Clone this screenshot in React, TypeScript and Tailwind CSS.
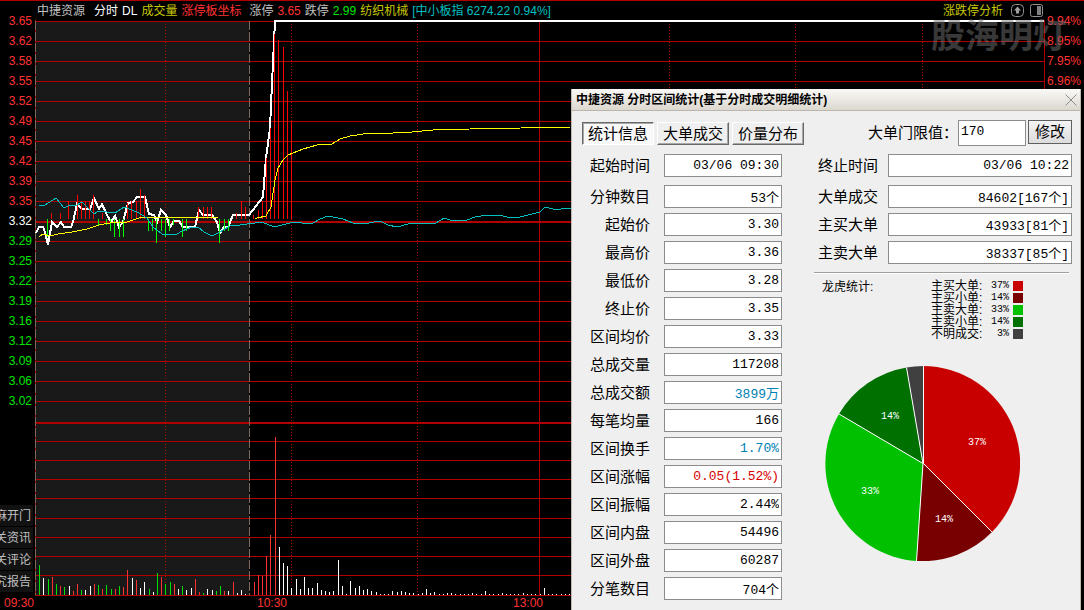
import React from "react";

const PRICES = [
  "3.65", "3.62", "3.58", "3.55", "3.52", "3.49", "3.45", "3.42", "3.39", "3.35",
  "3.32", "3.29", "3.25", "3.22", "3.19", "3.16", "3.12", "3.09", "3.06", "3.02",
];
const BASE_INDEX = 10;
const PERCENTS = ["9.94%", "8.95%", "7.95%", "6.96%"];
const SIDE_LINKS = ["麻开门", "关资讯", "关评论", "究报告"];

const BOTTOM = 595;
const GRID_ROWS = [
  ...PRICES.map((_, i) => 21 + i * 20).filter((y) => y !== 221),
  441, 460, 479, 498, 518, 537, 556, 575, BOTTOM,
];

const PRICE_LINE =
  "36,233 39,227 43,227 45,232 48,245 52,222 57,227 61,222 64,227 71,227 73,222 77,204 82,209 90,209 94,198 99,209 102,204 107,215 111,222 115,216 119,227 123,222 128,203 133,202 137,197 145,197 149,214 154,215 157,222 161,210 166,215 170,227 174,221 179,221 183,227 195,227 199,210 203,215 212,215 217,222 220,233 224,227 228,227 233,215 249,215 263,197 266,158 270,128 272,83 274,42 275,21 1044,21";
const AVERAGE_LINE =
  "39,237 43,234 50,236 58,234 72,232 87,229 99,225 110,223 127,222 142,217 167,217 218,218 257,218 266,216 271,207 275,180 278,168 283,160 288,155 303,149 317,145 332,144 340,139 350,136 370,133 393,133 412,132 433,130 470,129 521,128 571,127 700,126";
const INDEX_LINE =
  "39,205 45,205 56,198 64,208 70,205 75,206 82,202 94,214 99,211 115,213 124,207 137,212 147,218 153,227 162,234 177,234 182,231 192,227 198,227 204,232 212,236 220,232 230,226 240,225 262,222 274,227 290,223 297,222 307,224 313,223 320,219 328,216 343,219 353,223 363,224 380,221 388,225 397,227 412,223 418,224 436,223 444,218 453,221 467,220 475,217 488,215 503,216 511,218 520,217 540,212 545,207 553,209 561,209 571,208 600,208";

const UP_BARS: [number, number][] = [
  [51, 213], [60, 213], [68, 201], [77, 195], [81, 201], [85, 201], [89, 201], [93, 195],
  [102, 213], [127, 203], [131, 201], [136, 201], [140, 189], [144, 195], [198, 207],
  [203, 207], [207, 207], [211, 207], [236, 213], [241, 201], [245, 207], [253, 215],
  [258, 210], [262, 201], [266, 158], [270, 128], [274, 34], [278, 40], [283, 47],
  [287, 91], [291, 122],
];
const DOWN_BARS: [number, number][] = [
  [47, 237], [98, 225], [106, 225], [110, 231], [114, 237], [119, 237], [123, 237],
  [148, 231], [152, 231], [156, 243], [161, 231], [165, 237], [169, 231], [173, 225],
  [182, 237], [186, 231], [219, 243], [224, 231], [228, 231],
];

const VOLUME: [number, number, string][] = [
  [39, 30, "g"], [43, 17, "w"], [48, 16, "g"], [52, 18, "r"], [56, 11, "g"], [60, 9, "r"],
  [64, 8, "g"], [69, 9, "w"], [73, 4, "r"], [77, 11, "r"], [81, 5, "g"], [85, 5, "w"],
  [90, 9, "w"], [94, 11, "r"], [98, 10, "g"], [102, 6, "r"], [106, 10, "g"], [111, 6, "g"],
  [115, 6, "r"], [119, 9, "g"], [123, 8, "r"], [127, 25, "r"], [132, 17, "w"], [136, 15, "r"],
  [140, 7, "w"], [144, 13, "w"], [149, 6, "g"], [153, 3, "w"], [157, 22, "g"], [161, 18, "r"],
  [165, 11, "g"], [170, 13, "g"], [174, 11, "r"], [178, 6, "w"], [182, 9, "g"], [186, 5, "w"],
  [191, 7, "w"], [195, 16, "r"], [199, 3, "r"], [203, 2, "g"], [207, 6, "w"], [212, 5, "w"],
  [216, 4, "g"], [220, 9, "g"], [224, 4, "r"], [228, 4, "w"], [233, 13, "r"], [237, 2, "w"],
  [241, 5, "w"], [245, 1, "w"], [254, 13, "r"], [258, 20, "r"], [262, 19, "r"], [266, 39, "r"],
  [270, 60, "r"], [275, 158, "r"], [279, 48, "w"], [283, 32, "w"], [287, 29, "w"], [291, 7, "w"],
  [296, 16, "w"], [300, 6, "w"], [304, 18, "w"], [308, 7, "w"], [312, 7, "w"], [317, 12, "w"],
  [321, 5, "w"], [325, 4, "w"], [329, 3, "w"], [333, 4, "w"], [338, 35, "w"], [342, 9, "w"],
  [346, 1, "w"], [350, 14, "w"], [355, 7, "w"], [359, 9, "w"], [363, 5, "w"], [367, 6, "w"],
  [371, 4, "w"], [376, 3, "w"], [380, 1, "w"], [384, 1, "w"], [388, 1, "w"], [392, 4, "w"],
  [397, 3, "w"], [401, 4, "w"], [405, 3, "w"], [409, 2, "w"], [413, 2, "w"], [418, 1, "w"],
  [422, 2, "w"], [426, 6, "w"], [430, 2, "w"], [434, 3, "w"], [439, 1, "w"], [443, 1, "w"],
  [447, 2, "w"], [451, 2, "w"], [455, 1, "w"], [460, 1, "w"], [464, 1, "w"], [468, 1, "w"],
  [472, 2, "w"], [476, 1, "w"], [481, 1, "w"], [485, 4, "w"], [489, 1, "w"], [493, 1, "w"],
  [498, 1, "w"], [502, 2, "w"], [506, 1, "w"], [510, 1, "w"], [514, 1, "w"], [518, 1, "w"],
  [523, 2, "w"], [527, 1, "w"], [531, 1, "w"], [535, 1, "w"], [540, 1, "w"], [544, 7, "w"],
  [548, 1, "w"], [552, 1, "w"], [556, 1, "w"], [561, 1, "w"], [565, 1, "w"], [569, 1, "w"],
];
const VOLUME_FILL: Record<string, string> = { g: "#00e000", w: "#ffffff", r: "#ff3232" };

function PriceChart() {
  return (
    <svg
      viewBox="35 20 1010 576"
      preserveAspectRatio="none"
      className="block min-h-0 w-full flex-1"
      shapeRendering="crispEdges"
      fill="none"
      role="img"
      aria-label="分时走势"
    >
      <rect x="36" y="21" width="213" height="574" fill="#191919" />
      {GRID_ROWS.map((y) => (
        <rect key={y} x="35" y={y} width="1010" height="1" fill="#b00000" />
      ))}
      <rect x="35" y="221" width="1010" height="2" fill="#b00000" />
      <rect x="35" y="422" width="1010" height="2" fill="#b00000" />
      {[165, 291, 417, 669, 795, 922].map((x) => (
        <path key={x} d={`M${x + 0.5} 24V${BOTTOM}`} stroke="#b00000" strokeDasharray="1 2" />
      ))}
      {[35, 539, 1044].map((x) => (
        <rect key={x} x={x} y="20" width="1" height="576" fill="#b00000" />
      ))}
      {[35, 249].map((x) => (
        <path key={x} d={`M${x + 0.5} 21V${BOTTOM}`} stroke="#80685a" strokeDasharray="9 2" />
      ))}
      <polyline points={PRICE_LINE} stroke="#ffffff" strokeWidth="2" />
      {UP_BARS.map(([x, top]) => (
        <rect key={x} x={x} y={top} width="1" height={219 - top} fill="#ff0000" />
      ))}
      {DOWN_BARS.map(([x, end]) => (
        <rect key={x} x={x} y="219" width="1" height={end - 219} fill="#00ff00" />
      ))}
      <polyline points={AVERAGE_LINE} stroke="#ffff00" />
      <polyline points={INDEX_LINE} stroke="#00c0c0" />
      {VOLUME.map(([x, h, c]) => (
        <rect key={x} x={x} y={BOTTOM - h} width="1" height={h} fill={VOLUME_FILL[c]} />
      ))}
    </svg>
  );
}

function LeftAxis() {
  return (
    <aside className="flex w-[35px] shrink-0 flex-col border-t border-[#b00000] pt-[10px] text-xs text-[#ff3232]">
      {PRICES.map((p, i) => (
        <div
          key={p}
          className={`h-5 pr-[3px] text-right leading-5 ${
            i === BASE_INDEX ? "text-white" : i > BASE_INDEX ? "text-[#00e600]" : ""
          }`}
        >
          {p}
        </div>
      ))}
      <nav className="mt-auto mb-1 flex w-[33px] flex-col gap-px">
        {SIDE_LINKS.map((t) => (
          <button
            key={t}
            type="button"
            className="flex h-[21px] items-center justify-end overflow-hidden bg-[#121212] pr-[2px] whitespace-nowrap text-[#c0c0c0]"
          >
            {t}
          </button>
        ))}
      </nav>
      <div className="h-[14px] pr-px text-right leading-[15px]">09:30</div>
    </aside>
  );
}

function ChartHeader() {
  return (
    <header className="flex h-5 shrink-0 items-center gap-1 border-t border-[#b00000] pr-[2px] pl-[2px] text-xs leading-5 whitespace-nowrap text-[#c0c0c0]">
      <span className="mr-[5px]">中捷资源</span>
      <span className="text-white">分时</span>
      <span className="text-white">DL</span>
      <span className="text-[#c8c800]">成交量</span>
      <span className="mr-1 text-[#ff3232]">涨停板坐标</span>
      <span>涨停</span>
      <span className="text-[#ff3232]">3.65</span>
      <span>跌停</span>
      <span className="text-[#00e600]">2.99</span>
      <span className="text-[#c8c800]">纺织机械</span>
      <span className="text-[#00c0c0]">[中小板指 6274.22 0.94%]</span>
      <button type="button" className="ml-auto text-[#c8c800]">涨跌停分析</button>
      <button type="button" aria-label="上移" className="ml-1">
        <svg viewBox="0 0 13 13" className="size-[13px]" fill="none" stroke="#909090">
          <rect x="0.5" y="0.5" width="12" height="12" rx="4" />
          <path d="M6.5 2.5 10 6.5H8V9.5H5V6.5H3Z" fill="#a0a0a0" stroke="none" />
        </svg>
      </button>
      <button type="button" aria-label="侧栏" className="ml-[2px]">
        <svg viewBox="0 0 13 13" className="size-[13px]" fill="none" stroke="#909090">
          <rect x="0.5" y="0.5" width="12" height="12" rx="2" />
          <rect x="7" y="2" width="4" height="9" fill="#808080" stroke="none" />
        </svg>
      </button>
    </header>
  );
}

const FIELD =
  "h-[23px] border border-[#8c8c8c] bg-white pr-[2px] text-right font-['Liberation_Mono','Noto_Sans_CJK_SC',monospace] text-[13px] outline-none";

const LEFT_FIELDS: [string, string, string?][] = [
  ["起始时间", "03/06 09:30"],
  ["分钟数目", "53个"],
  ["起始价", "3.30"],
  ["最高价", "3.36"],
  ["最低价", "3.28"],
  ["终止价", "3.35"],
  ["区间均价", "3.33"],
  ["总成交量", "117208"],
  ["总成交额", "3899万", "text-[#0080b4]"],
  ["每笔均量", "166"],
  ["区间换手", "1.70%", "text-[#0080b4]"],
  ["区间涨幅", "0.05(1.52%)", "text-[#d80000]"],
  ["区间振幅", "2.44%"],
  ["区间内盘", "54496"],
  ["区间外盘", "60287"],
  ["分笔数目", "704个"],
];
const RIGHT_FIELDS: [string, string][] = [
  ["终止时间", "03/06 10:22"],
  ["大单成交", "84602[167个]"],
  ["主买大单", "43933[81个]"],
  ["主卖大单", "38337[85个]"],
];
const LEGEND: [string, string, string][] = [
  ["主买大单", "37%", "bg-[#c80000]"],
  ["主买小单", "14%", "bg-[#780000]"],
  ["主卖大单", "33%", "bg-[#00c000]"],
  ["主卖小单", "14%", "bg-[#007000]"],
  ["不明成交", "3%", "bg-[#404040]"],
];
const PIE_LABELS: [number, number, string][] = [
  [152, 79, "37%"],
  [119, 156, "14%"],
  [45, 128, "33%"],
  [65, 53, "14%"],
];

function Pie() {
  return (
    <svg viewBox="0 0 195 195" className="size-[195px]" role="img" aria-label="龙虎统计">
      <path d="M98 97.5V0A97.5 97.5 0 0 1 167 166Z" fill="#c80000" />
      <path d="M98 97.5 167 166A97.5 97.5 0 0 1 91.5 195Z" fill="#780000" />
      <path d="M98 97.5 91.5 195A97.5 97.5 0 0 1 14 48Z" fill="#00c000" />
      <path d="M98 97.5 14 48A97.5 97.5 0 0 1 81.500 1.500Z" fill="#007000" />
      <path d="M98 97.5 81.500 1.500A97.5 97.5 0 0 1 98 0Z" fill="#404040" />
      <path d="M98.500 0V97.5L167 166M98 97.5 91.500 195M98 97.5 14 48M98 97.5 81.500 1.500" fill="none" stroke="#ffffff" />
      {PIE_LABELS.map(([x, y, t]) => (
        <text
          key={`${x}-${y}`}
          x={x}
          y={y}
          textAnchor="middle"
          fill="#ffffff"
          className="font-['Liberation_Mono',monospace] text-[10px]"
        >
          {t}
        </text>
      ))}
    </svg>
  );
}

function StatsDialog() {
  const raised =
    "h-[23px] border border-t-white border-l-white border-r-[#696969] border-b-[#696969] bg-[#efefef] shadow-[inset_-1px_-1px_0_#a8a8a8]";
  return (
    <section
      role="dialog"
      aria-labelledby="stats-title"
      className="absolute top-[89px] right-[3px] bottom-0 flex w-[510px] flex-col overflow-hidden border-x border-[#c0bab2] bg-[#efefef] text-[15px] text-black"
    >
      <div className="flex h-[22px] shrink-0 items-center justify-between border-b border-[#bab6ae] bg-linear-to-b from-[#faf9f6] to-[#dcd8d0] pr-[3px] pl-1">
        <h1 id="stats-title" className="text-xs font-bold whitespace-nowrap">
          中捷资源 分时区间统计(基于分时成交明细统计)
        </h1>
        <button type="button" aria-label="关闭">
          <svg viewBox="0 0 12 12" className="size-3" stroke="#8c8c8c" fill="none">
            <path d="M0.500 0.500 11.500 11.500M11.500 0.500 0.500 11.500" />
          </svg>
        </button>
      </div>

      <div className="flex shrink-0 items-start pt-[9px] pr-2 pl-[10px]">
        <div className="flex gap-[3px] pt-[2px]" role="tablist">
          <button
            type="button"
            role="tab"
            aria-selected="true"
            className="h-[23px] w-[72px] border border-t-[#696969] border-r-white border-b-white border-l-[#696969] bg-[#f8f8f8] leading-[21px] shadow-[inset_1px_1px_0_#a8a8a8]"
          >
            统计信息
          </button>
          <button type="button" role="tab" aria-selected="false" className={`${raised} w-[72px] leading-[21px]`}>
            大单成交
          </button>
          <button type="button" role="tab" aria-selected="false" className={`${raised} w-[72px] leading-[21px]`}>
            价量分布
          </button>
        </div>
        <label htmlFor="limit" className="ml-auto leading-[26px]">
          大单门限值：
        </label>
        <input
          id="limit"
          defaultValue="170"
          className="h-[26px] w-[68px] border border-[#8c8c8c] bg-white px-[2px] pb-[3px] font-['Liberation_Mono',monospace] text-[13px] outline-none"
        />
        <button
          type="button"
          className="ml-[2px] h-6 w-11 border border-[#606060] bg-linear-to-b from-[#f4f4f4] to-[#dcdcdc] leading-[22px]"
        >
          修改
        </button>
      </div>

      <div className="flex pt-2 pr-2 pl-[18px]">
        <div className="flex flex-col gap-[5px]">
          {LEFT_FIELDS.map(([label, value, tone], i) => (
            <div key={label} className={`flex items-center gap-[14px] ${i === 0 ? "mb-[3px]" : ""}`}>
              <label htmlFor={`left-${i}`} className="w-[60px] text-right leading-[23px]">
                {label}
              </label>
              <input id={`left-${i}`} readOnly value={value} className={`${FIELD} w-[118px] ${tone ?? ""}`} />
            </div>
          ))}
        </div>

        <div className="ml-9 flex min-w-0 flex-1 flex-col">
          <div className="flex flex-col gap-[5px]">
            {RIGHT_FIELDS.map(([label, value], i) => (
              <div key={label} className={`flex items-center gap-[10px] ${i === 0 ? "mb-[3px]" : ""}`}>
                <label htmlFor={`right-${i}`} className="w-[60px] shrink-0 leading-[23px]">
                  {label}
                </label>
                <input id={`right-${i}`} readOnly value={value} className={`${FIELD} min-w-0 flex-1`} />
              </div>
            ))}
          </div>
          <hr className="mt-2 mr-[3px] -ml-1 h-[2px] border-t border-b border-t-[#a0a0a0] border-b-white" />
          <div className="mt-[6px] flex pl-1 text-xs leading-3">
            <h2 className="w-[109px] pt-px">龙虎统计:</h2>
            <ul>
              {LEGEND.map(([label, pct, swatch]) => (
                <li key={label} className="flex h-3 items-center">
                  <span className="w-[54px]">{label}:</span>
                  <span className="w-6 text-right font-['Liberation_Mono',monospace] text-[10px]">{pct}</span>
                  <i className={`ml-1 size-[10px] ${swatch}`} />
                </li>
              ))}
            </ul>
          </div>
          <div className="mt-[26px] pl-[7px]">
            <Pie />
          </div>
        </div>
      </div>
    </section>
  );
}

export default function App() {
  return (
    <main className="relative flex h-screen overflow-hidden bg-black font-['Liberation_Sans','Noto_Sans_CJK_SC',sans-serif]">
      <LeftAxis />
      <div className="flex min-w-0 flex-1 flex-col">
        <ChartHeader />
        <PriceChart />
        <div className="flex h-[14px] shrink-0 text-xs leading-[15px] text-[#ff3232]">
          <span className="w-[252px] text-right">10:30</span>
          <span className="w-[256px] text-right">13:00</span>
        </div>
      </div>
      <aside className="w-[39px] shrink-0 border-t border-[#b00000] pt-[10px] text-xs text-[#ff3232]">
        {PERCENTS.map((p) => (
          <div key={p} className="h-5 pl-[2px] leading-5">
            {p}
          </div>
        ))}
      </aside>
      <div className="pointer-events-none absolute top-[15px] right-[17px] text-[34px] leading-[42px] font-bold text-[#707070]/50">
        股海明灯
      </div>
      <StatsDialog />
    </main>
  );
}
